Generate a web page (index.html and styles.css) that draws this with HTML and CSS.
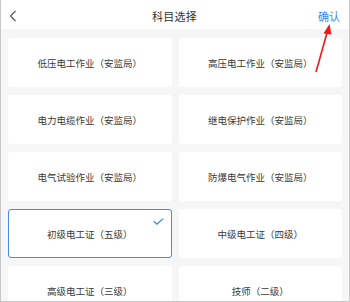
FILE: index.html
```html
<!DOCTYPE html>
<html lang="zh-CN">
  <head>
    <meta charset="UTF-8" />
    <meta name="viewport" content="width=device-width, initial-scale=1.0" />
    <title>科目选择</title>
    <link rel="stylesheet" href="styles.css">
  </head>
  <body>
    <div class="page">
      <!-- top bar -->
      <div class="header">
        <span class="back">
          <svg width="8" height="12" viewBox="0 0 8 12">
            <path d="M6.5 1 L1.5 6 L6.5 11" fill="none" stroke="#555" stroke-width="1.2" />
          </svg>
        </span>
        <span class="title">科目选择</span>
        <span class="confirm">确认</span>
      </div>

      <!-- subject list -->
      <div class="grid">
        <div class="card">低压电工作业（安监局）</div>
        <div class="card">高压电工作业（安监局）</div>
        <div class="card">电力电缆作业（安监局）</div>
        <div class="card">继电保护作业（安监局）</div>
        <div class="card">电气试验作业（安监局）</div>
        <div class="card">防爆电气作业（安监局）</div>
        <div class="card selected">
          初级电工证（五级）
          <svg class="check" width="11" height="7" viewBox="0 0 11 7">
            <path d="M0.8 3.2 L3.8 6.2 L10.2 0.6" fill="none" stroke="#3b7cf0" stroke-width="1.2" />
          </svg>
        </div>
        <div class="card">中级电工证（四级）</div>
        <div class="card">高级电工证（三级）</div>
        <div class="card">技师（二级）</div>
      </div>

      <!-- annotation arrow -->
      <svg class="arrow" width="350" height="302" viewBox="0 0 350 302">
        <line x1="316" y1="72" x2="327.5" y2="31" stroke="#f01818" stroke-width="1.6" />
        <polygon points="329.5,24 323.5,33.5 331.5,34.5" fill="#f01818" />
      </svg>
    </div>
  </body>
</html>
```

FILE: styles.css
```css
body {
  margin: 0;
  font-family: "Noto Sans CJK SC", "Noto Sans", sans-serif;
}
.page {
  position: relative;
  width: 350px;
  height: 302px;
  box-sizing: border-box;
  border: 1px solid #c8c8c8;
  border-top: none;
  background-color: #f6f6f6;
  overflow: hidden;
}
.header {
  height: 29px;
  background-color: #fff;
  display: flex;
  align-items: center;
  justify-content: space-between;
  padding: 0 9px 0 8px;
}
.back {
  width: 40px;
  display: flex;
  align-items: center;
  margin-top: 2px;
}
.title {
  font-size: 11px;
  letter-spacing: 0.3px;
  color: #333;
  margin-top: 2px;
}
.confirm {
  width: 40px;
  text-align: right;
  font-size: 11px;
  color: #3e85f2;
  margin-top: 2px;
}
.grid {
  display: grid;
  grid-template-columns: 1fr 1fr;
  column-gap: 7px;
  row-gap: 8px;
  padding: 9px 7px 0 7px;
}
.card {
  position: relative;
  height: 49px;
  background-color: #fff;
  border-radius: 3px;
  display: flex;
  align-items: center;
  justify-content: center;
  font-size: 9.5px;
  color: #3a3a3a;
}
.selected {
  box-sizing: border-box;
  border: 1px solid #4a88f0;
}
.check {
  position: absolute;
  top: 8px;
  right: 7px;
}
.arrow {
  position: absolute;
  top: 0;
  left: -1px;
  pointer-events: none;
}
```
